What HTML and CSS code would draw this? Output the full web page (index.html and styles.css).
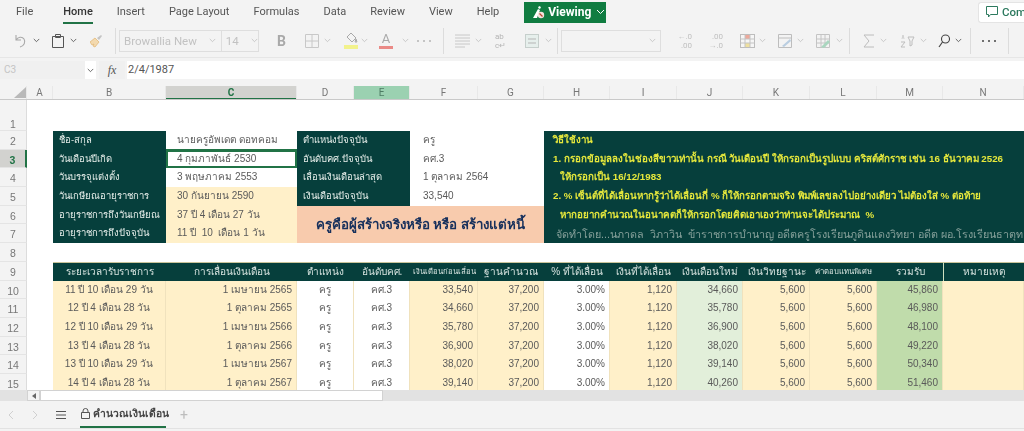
FILE: index.html
```html
<!DOCTYPE html>
<html lang="th">
<head>
    <meta charset="UTF-8">
    <title>คำนวณเงินเดือน</title>
    <link rel="stylesheet" href="styles.css">
</head>
<body>
    <div class="app">
        <div class="menubar">
            <span class="tab tab-file">File</span>
            <span class="tab tab-home">Home</span>
            <span class="tab">Insert</span>
            <span class="tab">Page Layout</span>
            <span class="tab">Formulas</span>
            <span class="tab">Data</span>
            <span class="tab">Review</span>
            <span class="tab">View</span>
            <span class="tab">Help</span>
            <span class="viewing">
                <svg width="13" height="14" viewBox="0 0 13 14"><path d="M1 13 6 4l2 1-3 8zM7 1l2 1-1 2-2-1z" fill="#fff"/><circle cx="9" cy="10" r="3.200" fill="#f6e3de"/><path d="M7.500 8.500l3 3" stroke="#b5442c" stroke-width="1.300"/></svg>
                Viewing
                <svg class="chev-white" viewBox="0 0 9 6"><path d="M1 1l3.500 3.500L8 1"/></svg>
            </span>
            <span class="comments">
                <svg class="comment-ic" viewBox="0 0 12 12"><path d="M.5.500h11v8H4.500L2.500 11V8.500h-2z" fill="none" stroke="#2d7a5f"/></svg>
                Comments
            </span>
        </div>

        <div class="toolbar">
            <svg class="ic w13" viewBox="0 0 13 14"><path d="M2 1v5h5M2 6c2-3 6-4 8-1 2 3 0 7-4 8" fill="none" stroke="#a8a8a8" stroke-width="1.100"/></svg>
            <svg class="chev dark m6" viewBox="0 0 9 6"><path d="M1 1l3.500 3.500L8 1"/></svg>
            <svg class="ic w12 m12" viewBox="0 0 12 14"><path d="M.5 2.500h11v11H.5zM3.500.5h5v3h-5z" fill="none" stroke="#555"/></svg>
            <svg class="chev dark m6" viewBox="0 0 9 6"><path d="M1 1l3.500 3.500L8 1"/></svg>
            <svg class="ic w13 m13" viewBox="0 0 13 14"><path d="M0 8l5-4 4 4-4 5-2-1 1-2-2 1z" fill="#f3d9ae" stroke="#e0b36e" stroke-width=".7"/><path d="M7 4l4-3 1 1-3 4z" fill="#c4c4c4"/></svg>
            <span class="sep m12"></span>
            <span class="fontbox m3">
                <span class="fontname">Browallia New</span>
                <svg class="chev" viewBox="0 0 9 6"><path d="M1 1l3.500 3.500L8 1"/></svg>
                <span class="fontsize">14</span>
                <svg class="chev" viewBox="0 0 9 6"><path d="M1 1l3.500 3.500L8 1"/></svg>
            </span>
            <span class="bold m18">B</span>
            <svg class="ic w14 m19" viewBox="0 0 14 14"><path d="M.5.500h13v13H.5zM7 .5v13M.5 7h13" fill="none" stroke="#c8c8c8"/></svg>
            <svg class="chev m5" viewBox="0 0 9 6"><path d="M1 1l3.500 3.500L8 1"/></svg>
            <span class="swatch fill-swatch m13">
                <svg width="13" height="11" viewBox="0 0 13 11"><path d="M6 1l5 5-4 4-5-5zM11 7l1 3h-2z" fill="none" stroke="#a9a9a9"/></svg>
            </span>
            <svg class="chev m3" viewBox="0 0 9 6"><path d="M1 1l3.500 3.500L8 1"/></svg>
            <span class="swatch text-swatch m11">A</span>
            <svg class="chev m9" viewBox="0 0 9 6"><path d="M1 1l3.500 3.500L8 1"/></svg>
            <span class="dots light m8"><i></i><i></i><i></i></span>
            <span class="sep m12"></span>
            <svg class="ic w15 m11" viewBox="0 0 15 14"><path d="M0 1h15M0 4h15M0 7h15M0 10h15M0 13h10" stroke="#c8c8c8"/></svg>
            <svg class="chev m5" viewBox="0 0 9 6"><path d="M1 1l3.500 3.500L8 1"/></svg>
            <span class="wrapab m13">ab<br>c↵</span>
            <svg class="ic w14 m16" viewBox="0 0 14 14"><rect x=".5" y=".5" width="13" height="13" fill="#e6efec" stroke="#c6cfcc"/><path d="M3 5h8M3 9h8" stroke="#b5b5b5"/></svg>
            <svg class="chev m6" viewBox="0 0 9 6"><path d="M1 1l3.500 3.500L8 1"/></svg>
            <span class="sep m5"></span>
            <span class="combo m3"><svg class="chev" viewBox="0 0 9 6"><path d="M1 1l3.500 3.500L8 1"/></svg></span>
            <span class="dec m16">←.0<br>.00</span>
            <span class="dec m16">.00<br>→.0</span>
            <svg class="ic w15 m17" viewBox="0 0 15 14"><rect x=".5" y=".5" width="14" height="13" fill="#f6f6f6" stroke="#bdbdbd"/><rect x="5" y="1" width="5" height="4" fill="#eda99b"/><rect x="5" y="9" width="5" height="4" fill="#eee0a0"/><path d="M5 .5v13M10 .5v13M.5 5h14M.5 9h14" stroke="#c4c4c4"/></svg>
            <svg class="chev m4" viewBox="0 0 9 6"><path d="M1 1l3.500 3.500L8 1"/></svg>
            <svg class="ic w14 m12" viewBox="0 0 14 14"><path d="M.5.500h13v13H.5zM.5 4h13" fill="none" stroke="#bdbdbd"/><path d="M4 12l8-7 1 2-7 6z" fill="#b9cde0"/></svg>
            <svg class="chev m5" viewBox="0 0 9 6"><path d="M1 1l3.500 3.500L8 1"/></svg>
            <svg class="ic w14 m12" viewBox="0 0 14 14"><path d="M.5.500h13v13H.5zM.5 5h13M.5 9h13M5 .5v13M9 .5v13" fill="none" stroke="#c4c4c4"/><path d="M5 13l7-7 2 2-6 6z" fill="#a9d6bf"/></svg>
            <svg class="chev m6" viewBox="0 0 9 6"><path d="M1 1l3.500 3.500L8 1"/></svg>
            <span class="sep m6"></span>
            <svg class="ic w12 m13" viewBox="0 0 12 14"><path d="M11 1H1l5 6-5 6h10" fill="none" stroke="#bcbcbc"/></svg>
            <svg class="chev m5" viewBox="0 0 9 6"><path d="M1 1l3.500 3.500L8 1"/></svg>
            <svg class="ic w15 m13" viewBox="0 0 15 14"><path d="M1 8h4l-4 5h4M8 3h6l-2 4v4l-2 1V7z" fill="none" stroke="#bdbdbd"/><path d="M3 1l-1 4M3 1l1 4" stroke="#cfcfcf"/></svg>
            <svg class="chev m5" viewBox="0 0 9 6"><path d="M1 1l3.500 3.500L8 1"/></svg>
            <svg class="ic w12 m11" viewBox="0 0 12 14"><circle cx="7.500" cy="5" r="4" fill="none" stroke="#444" stroke-width="1.100"/><path d="M4.500 8 1 13" stroke="#444" stroke-width="1.200"/></svg>
            <svg class="chev dark m5" viewBox="0 0 9 6"><path d="M1 1l3.500 3.500L8 1"/></svg>
            <span class="sep m8"></span>
            <span class="dots m11"><i></i><i></i><i></i></span>
            <span class="sep m12"></span>
        </div>

        <div class="formulabar">
            <div class="namebox"><span>C3</span><em><svg class="chev dark" viewBox="0 0 9 6"><path d="M1 1l3.500 3.500L8 1"/></svg></em></div>
            <div class="fx">fx</div>
            <div class="formula">2/4/1987</div>
        </div>

        <div class="colhead">
            <div class="corner"><svg width="12" height="11" viewBox="0 0 12 11"><path d="M12 0v11H0z" fill="#b9b9b9"/></svg></div>
            <div>A</div>
            <div>B</div>
            <div class="col-sel">C</div>
            <div>D</div>
            <div class="col-alt">E</div>
            <div>F</div>
            <div>G</div>
            <div>H</div>
            <div>I</div>
            <div>J</div>
            <div>K</div>
            <div>L</div>
            <div>M</div>
            <div>N</div>
        </div>

        <div class="sheet">
            <div class="rh">1</div>

            <div class="rh">2</div>
            <div class="label first">ชื่อ-สกุล</div>
            <div class="value line-under">นายครูอัพเดต ดอทคอม</div>
            <div class="label span2">ตำแหน่งปัจจุบัน</div>
            <div class="value span2">ครู</div>
            <div class="howto">
                <div class="bright">วิธีใช้งาน</div>
                <div class="bright">1. กรอกข้อมูลลงในช่องสีขาวเท่านั้น กรณี วันเดือนปี ให้กรอกเป็นรูปแบบ คริสต์ศักราช เช่น 16 ธันวาคม 2526</div>
                <div class="bright indent">ให้กรอกเป็น 16/12/1983</div>
                <div class="bright">2. % เซ็นต์ที่ได้เลื่อนหากรู้ว่าได้เลื่อนกี่ % ก็ให้กรอกตามจริง พิมพ์เลขลงไปอย่างเดียว ไม่ต้องใส่ % ต่อท้าย</div>
                <div class="bright indent">หากอยากคำนวณในอนาคตก็ให้กรอกโดยคิดเอาเองว่าท่านจะได้ประมาณ&nbsp; %</div>
                <div class="credit">จัดทำโดย...นภาดล&nbsp; วิภาวิน&nbsp; ข้าราชการบำนาญ อดีตครูโรงเรียนภูดินแดงวิทยา อดีต ผอ.โรงเรียนธาตุทองอำนวยวิทย์</div>
            </div>

            <div class="rh rh-sel">3</div>
            <div class="label first">วันเดือนปีเกิด</div>
            <div class="value selected">4 กุมภาพันธ์ 2530</div>
            <div class="label span2">อันดับคศ.ปัจจุบัน</div>
            <div class="value span2">คศ.3</div>

            <div class="rh">4</div>
            <div class="label first">วันบรรจุแต่งตั้ง</div>
            <div class="value">3 พฤษภาคม 2553</div>
            <div class="label span2">เลื่อนเงินเดือนล่าสุด</div>
            <div class="value span2">1 ตุลาคม 2564</div>

            <div class="rh">5</div>
            <div class="label first">วันเกษียณอายุราชการ</div>
            <div class="value cream">30 กันยายน 2590</div>
            <div class="label span2">เงินเดือนปัจจุบัน</div>
            <div class="value span2">33,540</div>

            <div class="rh">6</div>
            <div class="label first">อายุราชการถึงวันเกษียณ</div>
            <div class="value cream">37 ปี 4 เดือน 27 วัน</div>
            <div class="banner">ครูคือผู้สร้างจริงหรือ หรือ สร้างแต่หนี้</div>

            <div class="rh">7</div>
            <div class="label first">อายุราชการถึงปัจจุบัน</div>
            <div class="value cream">11 ปี&nbsp; 10&nbsp; เดือน 1 วัน</div>

            <div class="rh">8</div>

            <div class="rh">9</div>
            <div class="th first">ระยะเวลารับราชการ</div>
            <div class="th">การเลื่อนเงินเดือน</div>
            <div class="th">ตำแหน่ง</div>
            <div class="th">อันดับคศ.</div>
            <div class="th th-small">เงินเดือนก่อนเลื่อน</div>
            <div class="th">ฐานคำนวณ</div>
            <div class="th">% ที่ได้เลื่อน</div>
            <div class="th">เงินที่ได้เลื่อน</div>
            <div class="th">เงินเดือนใหม่</div>
            <div class="th">เงินวิทยฐานะ</div>
            <div class="th th-small">ค่าตอบแทนพิเศษ</div>
            <div class="th">รวมรับ</div>
            <div class="th th-note">หมายเหตุ</div>

            <div class="rh">10</div>
            <div class="td cream center first">11 ปี 10 เดือน 29 วัน</div>
            <div class="td cream">1 เมษายน 2565</div>
            <div class="td center">ครู</div>
            <div class="td center">คศ.3</div>
            <div class="td cream">33,540</div>
            <div class="td cream">37,200</div>
            <div class="td">3.00%</div>
            <div class="td cream">1,120</div>
            <div class="td mint">34,660</div>
            <div class="td cream">5,600</div>
            <div class="td cream">5,600</div>
            <div class="td green">45,860</div>
            <div class="td cream"></div>

            <div class="rh">11</div>
            <div class="td cream center first">12 ปี 4 เดือน 28 วัน</div>
            <div class="td cream">1 ตุลาคม 2565</div>
            <div class="td center">ครู</div>
            <div class="td center">คศ.3</div>
            <div class="td cream">34,660</div>
            <div class="td cream">37,200</div>
            <div class="td">3.00%</div>
            <div class="td cream">1,120</div>
            <div class="td mint">35,780</div>
            <div class="td cream">5,600</div>
            <div class="td cream">5,600</div>
            <div class="td green">46,980</div>
            <div class="td cream"></div>

            <div class="rh">12</div>
            <div class="td cream center first">12 ปี 10 เดือน 29 วัน</div>
            <div class="td cream">1 เมษายน 2566</div>
            <div class="td center">ครู</div>
            <div class="td center">คศ.3</div>
            <div class="td cream">35,780</div>
            <div class="td cream">37,200</div>
            <div class="td">3.00%</div>
            <div class="td cream">1,120</div>
            <div class="td mint">36,900</div>
            <div class="td cream">5,600</div>
            <div class="td cream">5,600</div>
            <div class="td green">48,100</div>
            <div class="td cream"></div>

            <div class="rh">13</div>
            <div class="td cream center first">13 ปี 4 เดือน 28 วัน</div>
            <div class="td cream">1 ตุลาคม 2566</div>
            <div class="td center">ครู</div>
            <div class="td center">คศ.3</div>
            <div class="td cream">36,900</div>
            <div class="td cream">37,200</div>
            <div class="td">3.00%</div>
            <div class="td cream">1,120</div>
            <div class="td mint">38,020</div>
            <div class="td cream">5,600</div>
            <div class="td cream">5,600</div>
            <div class="td green">49,220</div>
            <div class="td cream"></div>

            <div class="rh">14</div>
            <div class="td cream center first">13 ปี 10 เดือน 29 วัน</div>
            <div class="td cream">1 เมษายน 2567</div>
            <div class="td center">ครู</div>
            <div class="td center">คศ.3</div>
            <div class="td cream">38,020</div>
            <div class="td cream">37,200</div>
            <div class="td">3.00%</div>
            <div class="td cream">1,120</div>
            <div class="td mint">39,140</div>
            <div class="td cream">5,600</div>
            <div class="td cream">5,600</div>
            <div class="td green">50,340</div>
            <div class="td cream"></div>

            <div class="rh">15</div>
            <div class="td cream center first">14 ปี 4 เดือน 28 วัน</div>
            <div class="td cream">1 ตุลาคม 2567</div>
            <div class="td center">ครู</div>
            <div class="td center">คศ.3</div>
            <div class="td cream">39,140</div>
            <div class="td cream">37,200</div>
            <div class="td">3.00%</div>
            <div class="td cream">1,120</div>
            <div class="td mint">40,260</div>
            <div class="td cream">5,600</div>
            <div class="td cream">5,600</div>
            <div class="td green">51,460</div>
            <div class="td cream"></div>
        </div>

        <div class="hscroll">
            <span class="hscroll-btn"><svg width="4" height="6" viewBox="0 0 4 6"><path d="M4 0v6L0 3z" fill="#666"/></svg></span>
            <span class="hscroll-thumb"></span>
        </div>

        <div class="sheettabs">
            <svg class="nav nav-prev" viewBox="0 0 6 10"><path d="M5 1 1 5l4 4" fill="none" stroke="#d0d0d0"/></svg>
            <svg class="nav nav-next" viewBox="0 0 6 10"><path d="M1 1l4 4-4 4" fill="none" stroke="#d0d0d0"/></svg>
            <svg class="burger" viewBox="0 0 10 8"><path d="M0 .5h10M0 4h10M0 7.500h10" stroke="#555"/></svg>
            <span class="sheettab">
                <svg class="lock" viewBox="0 0 9 11"><path d="M.5 4.500h8v6h-8zM2 4.500V3a2.500 2.500 0 0 1 5 0v1.500" fill="none" stroke="#555"/></svg>
                คำนวณเงินเดือน
            </span>
            <span class="addsheet">+</span>
        </div>
    </div>
</body>
</html>
```
FILE: styles.css
```css
html, body {
    margin: 0;
    padding: 0;
    height: 431px;
    overflow: hidden;
}
body {
    font-family: Roboto, "Noto Sans", "Liberation Sans", sans-serif;
    background: #f3f3f3;
    color: #444;
}
.app {
    display: flex;
    flex-direction: column;
    height: 431px;
    filter: blur(0.35px);
}

/* top menu */
.menubar {
    display: flex;
    align-items: center;
    gap: 24px;
    height: 24px;
    padding-left: 16px;
    flex: none;
    font-size: 11px;
    color: #555;
}
.tab {
    line-height: 20px;
    white-space: nowrap;
}
.tab-file { margin-right: 6px; }
.tab-home {
    font-weight: 500;
    color: #333;
    border-bottom: 2px solid #217346;
    margin-top: 2px;
}
.viewing {
    display: flex;
    align-items: center;
    gap: 3px;
    height: 21px;
    width: 82px;
    flex: none;
    box-sizing: border-box;
    padding-left: 8px;
    margin-left: 1px;
    background: #107c41;
    color: #fff;
    font-weight: 700;
    font-size: 12px;
}
.chev-white {
    width: 9px;
    height: 6px;
    margin-left: 2px;
    fill: none;
    stroke: #fff;
}
.comments {
    display: flex;
    align-items: center;
    gap: 4px;
    margin-left: auto;
    height: 21px;
    width: 46px;
    flex: none;
    overflow: hidden;
    box-sizing: border-box;
    padding-left: 7px;
    background: #fff;
    border: 1px solid #e4e4e4;
    border-right: 0;
    border-radius: 3px 0 0 3px;
    color: #2d7a5f;
    font-size: 11.5px;
    font-weight: 500;
    white-space: nowrap;
}
.comment-ic {
    width: 12px;
    height: 12px;
    flex: none;
}

/* ribbon */
.toolbar {
    display: flex;
    align-items: center;
    height: 33px;
    padding-left: 14px;
    flex: none;
    border-bottom: 1px solid #e6e6e6;
}
.ic { flex: none; height: 14px; }
.w12 { width: 12px; }
.w13 { width: 13px; }
.w14 { width: 14px; }
.w15 { width: 15px; }
.m3 { margin-left: 3px; }
.m4 { margin-left: 4px; }
.m5 { margin-left: 5px; }
.m6 { margin-left: 6px; }
.m8 { margin-left: 8px; }
.m9 { margin-left: 9px; }
.m11 { margin-left: 11px; }
.m12 { margin-left: 12px; }
.m13 { margin-left: 13px; }
.m16 { margin-left: 16px; }
.m17 { margin-left: 17px; }
.m18 { margin-left: 18px; }
.m19 { margin-left: 19px; }
.chev {
    width: 7px;
    height: 5px;
    flex: none;
    fill: none;
    stroke: #bdbdbd;
}
.chev.dark { stroke: #444; }
.sep {
    width: 1px;
    height: 26px;
    flex: none;
    background: #dcdcdc;
}
.fontbox {
    display: flex;
    align-items: center;
    width: 140px;
    height: 22px;
    flex: none;
    box-sizing: border-box;
    border: 1px solid #dedede;
    color: #c2c2c2;
    font-size: 11.5px;
}
.fontname {
    width: 87px;
    padding-left: 4px;
    white-space: nowrap;
}
.fontsize {
    width: 26px;
    padding-left: 4px;
    margin-left: 5px;
    border-left: 1px solid #dedede;
    line-height: 20px;
}
.bold {
    width: 9px;
    flex: none;
    font-weight: 700;
    font-size: 14px;
    color: #a9a9a9;
}
.swatch {
    display: flex;
    flex-direction: column;
    align-items: center;
    width: 14px;
    height: 17px;
    flex: none;
    box-sizing: border-box;
}
.fill-swatch { border-bottom: 4px solid #f2f28c; }
.text-swatch {
    border-bottom: 3px solid #ea8a86;
    font-size: 13px;
    line-height: 13px;
    color: #a9a9a9;
}
.dots {
    display: flex;
    justify-content: space-between;
    width: 14px;
    flex: none;
}
.dots i {
    width: 2px;
    height: 2px;
    border-radius: 50%;
    background: #444;
}
.dots.light i { background: #b5b5b5; }
.wrapab {
    width: 14px;
    flex: none;
    font-size: 8px;
    line-height: 9px;
    color: #b5b5b5;
    white-space: nowrap;
}
.combo {
    display: flex;
    align-items: center;
    justify-content: flex-end;
    width: 100px;
    height: 22px;
    flex: none;
    box-sizing: border-box;
    padding-right: 4px;
    border: 1px solid #dedede;
}
.dec {
    width: 15px;
    flex: none;
    font-size: 8px;
    line-height: 9px;
    text-align: right;
    color: #c0c0c0;
    white-space: nowrap;
}

/* formula bar */
.formulabar {
    display: flex;
    height: 18px;
    margin-top: 3px;
    flex: none;
}
.namebox {
    display: flex;
    width: 96px;
    background: #f0f0f0;
    font-size: 10px;
    line-height: 18px;
    color: #c4c4c4;
}
.namebox span {
    flex: 1;
    padding-left: 4px;
}
.namebox em {
    display: flex;
    align-items: center;
    justify-content: center;
    width: 11px;
    background: #fff;
}
.fx {
    width: 26px;
    margin-left: 3px;
    background: #f0f0f0;
    font-family: "Liberation Serif", serif;
    font-style: italic;
    font-size: 12px;
    line-height: 18px;
    text-align: center;
    color: #555;
}
.formula {
    flex: 1;
    margin-left: 2px;
    padding-left: 1px;
    background: #fff;
    font-size: 11px;
    line-height: 18px;
    color: #555;
}

/* grid columns are shared by the header and the sheet */
.colhead,
.sheet {
    display: grid;
    grid-template-columns: 27px 26px 113px 131px 57px 56px 68px 66px 66px 67px 66px 67px 67px 66px 81px;
}
.colhead {
    height: 14px;
    margin-top: 7px;
    flex: none;
    box-sizing: border-box;
    border-bottom: 1px solid #c9c9c9;
    font-size: 10px;
    line-height: 13px;
    text-align: center;
    color: #777;
}
.colhead > div { border-right: 1px solid #e8e8e8; box-sizing: border-box; }
.corner {
    display: flex;
    justify-content: flex-end;
    align-items: center;
}
.colhead .col-sel {
    background: #d2d2cf;
    color: #217346;
    font-weight: 700;
    box-shadow: inset 0 -1px 0 #217346;
}
.colhead .col-alt {
    background: #9bd1b1;
    color: #4d7c63;
}

.sheet {
    grid-template-rows: 31px repeat(14, 18.700px);
    height: 290px;
    flex: none;
    overflow: hidden;
    background: #fff;
    font-family: "Liberation Sans", "Noto Sans", sans-serif;
    font-size: 10px;
    color: #5a5a5a;
}
.sheet > div {
    white-space: nowrap;
    overflow: hidden;
    box-sizing: border-box;
    line-height: 18.700px;
}
.rh {
    grid-column: 1;
    background: #f3f3f3;
    border-bottom: 1px solid #e4e4e4;
    border-right: 1px solid #dcdcdc;
    font-size: 10.500px;
    text-align: center;
    color: #777;
    padding-top: 1px;
}
.sheet > .rh:first-child {
    padding-top: 15px;
}
.rh-sel {
    background: #d2d2cf;
    color: #217346;
    font-weight: 700;
    border-right: 2px solid #217346;
}
.first { grid-column: 3; }
.span2 { grid-column: span 2; }
.label {
    padding-left: 6px;
    background: #063f3c;
    color: #e6eeea;
    font-size: 9.500px;
}
.value {
    padding-left: 11px;
}
.value.span2 { padding-left: 13px; }
.line-under {
    border-bottom: 1px solid #217346;
}
.selected {
    outline: 2px solid #217346;
    outline-offset: -2px;
}
.cream {
    background: #fff0c9;
}
.banner {
    grid-column: 5 / 9;
    grid-row: 6 / 8;
    background: #f8cbad;
    color: #17305c;
    font-size: 13.300px;
    font-weight: 700;
    text-align: center;
}
.sheet > .banner {
    line-height: 37.400px;
}
.howto {
    grid-column: 9 / 16;
    grid-row: 2 / 8;
    padding-left: 9px;
    background: #063f3c;
}
.bright {
    font-weight: 700;
    font-size: 9.750px;
    color: #e6e83c;
}
.indent { padding-left: 7px; }
.credit {
    padding-left: 3px;
    color: #86a09a;
    font-size: 10.750px;
    white-space: nowrap;
}
.th {
    background: #063f3c;
    color: #d8e4e0;
    text-align: center;
    border-top: 1px solid #c9c49a;
}
.sheet > .th-small { font-size: 7.700px; }
.th-note {
    border-left: 1px solid #cfe0c0;
}
.td {
    padding-right: 4px;
    text-align: right;
    border-right: 1px solid #f0e2bd;
}
.td.center {
    padding-right: 0;
    text-align: center;
}
.mint { background: #e2efda; }
.green { background: #c0dcab; }

/* bottom */
.hscroll {
    display: flex;
    height: 11px;
    padding-left: 27px;
    flex: none;
    background: #e2e2e2;
}
.hscroll-btn {
    display: flex;
    align-items: center;
    justify-content: center;
    width: 13px;
    background: #f3f3f3;
    border: 1px solid #d2d2d2;
    box-sizing: border-box;
}
.hscroll-thumb {
    width: 343px;
    background: #fff;
    border: 1px solid #d2d2d2;
    box-sizing: border-box;
}
.sheettabs {
    display: flex;
    align-items: center;
    height: 27px;
    flex: none;
    border-bottom: 1px solid #e2e2e2;
}
.nav {
    width: 6px;
    height: 10px;
    flex: none;
}
.nav-prev { margin-left: 8px; }
.nav-next { margin-left: 18px; }
.burger {
    width: 10px;
    height: 8px;
    margin-left: 18px;
    flex: none;
}
.sheettab {
    display: flex;
    align-items: center;
    gap: 3px;
    height: 27px;
    width: 86px;
    flex: none;
    margin-left: 14px;
    box-sizing: border-box;
    padding-left: 1px;
    border-bottom: 2px solid #217346;
    font-family: "Liberation Sans", sans-serif;
    font-size: 10.300px;
    font-weight: 700;
    color: #444;
    white-space: nowrap;
}
.lock {
    width: 9px;
    height: 11px;
    flex: none;
}
.addsheet {
    margin-left: 14px;
    font-size: 14px;
    color: #bdbdbd;
}
```
